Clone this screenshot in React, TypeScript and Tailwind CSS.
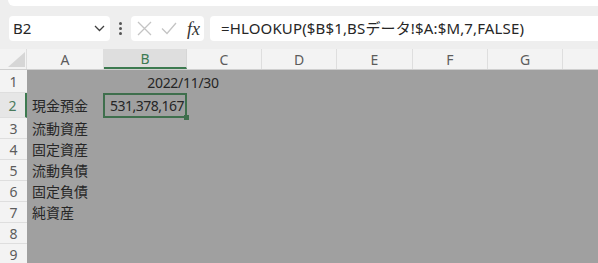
import React from 'react';

const COLS = [
  { label: 'A', w: 77 },
  { label: 'B', w: 83 },
  { label: 'C', w: 75 },
  { label: 'D', w: 75 },
  { label: 'E', w: 76 },
  { label: 'F', w: 75 },
  { label: 'G', w: 75 },
  { label: '', w: 60 },
];

const ROWS: { n: number; h: number; label?: string }[] = [
  { n: 1, h: 23 },
  { n: 2, h: 25, label: '現金預金' },
  { n: 3, h: 21, label: '流動資産' },
  { n: 4, h: 21, label: '固定資産' },
  { n: 5, h: 21, label: '流動負債' },
  { n: 6, h: 21, label: '固定負債' },
  { n: 7, h: 21, label: '純資産' },
  { n: 8, h: 21 },
  { n: 9, h: 21 },
];

const FONT = { fontFamily: '"Noto Sans", "Noto Sans CJK JP", sans-serif' };

const Chevron = () => (
  <svg width="11" height="7" viewBox="0 0 11 7" fill="none">
    <path d="M1 1l4.5 4.5L10 1" stroke="#404040" strokeWidth="1.3" />
  </svg>
);

const Cross = () => (
  <svg width="15" height="15" viewBox="0 0 15 15" fill="none">
    <path d="M1 1l13 13M14 1L1 14" stroke="#c4c4c4" strokeWidth="1.3" />
  </svg>
);

const Check = () => (
  <svg width="16" height="13" viewBox="0 0 16 13" fill="none">
    <path d="M1 6.5l5 5L15 1" stroke="#c4c4c4" strokeWidth="1.3" />
  </svg>
);

export default function App() {
  return (
    <div className="w-[598px] h-[263px] overflow-hidden bg-[#eeeeee] text-[#222]" style={FONT}>
      <div className="h-[6px] ml-[8px] bg-white rounded-bl-[6px]" />

      <div className="flex h-[25px] mt-[10px]">
        <div className="ml-[9px] w-[101px] bg-white rounded-[4px] flex items-center justify-between pl-[4px] pr-[5px]">
          <span className="text-[15px] leading-none text-[#262626]">B2</span>
          <Chevron />
        </div>
        <div className="w-[21px] flex flex-col items-center justify-center gap-[2px]">
          <span className="w-[3px] h-[3px] rounded-full bg-[#555]" />
          <span className="w-[3px] h-[3px] rounded-full bg-[#555]" />
          <span className="w-[3px] h-[3px] rounded-full bg-[#555]" />
        </div>
        <div className="w-[73px] bg-white rounded-[4px] flex items-center pl-[6px]">
          <Cross />
          <span className="ml-[9px]"><Check /></span>
          <span
            className="ml-[10px] italic text-[18px] leading-none text-[#333]"
            style={{ fontFamily: '"Liberation Serif", "DejaVu Serif", serif' }}
          >
            fx
          </span>
        </div>
        <div className="ml-[6px] flex-1 bg-white rounded-l-[4px] flex items-center pl-[11px]">
          <span className="text-[15px] leading-none text-[#262626] whitespace-nowrap tracking-[0.15px]">
            =HLOOKUP($B$1,BSデータ!$A:$M,7,FALSE)
          </span>
        </div>
      </div>

      <div className="flex h-[21px] mt-[8px] bg-[#f3f3f3] border-b border-[#cfcfcf]">
        <div className="w-[27px] shrink-0 relative border-r border-[#dedede]">
          <svg className="absolute left-[8px] top-[3px]" width="17" height="15" viewBox="0 0 17 15">
            <path d="M17 0V15H0Z" fill="#d6d6d6" />
          </svg>
        </div>
        {COLS.map(c => (
          <div
            key={c.label || 'x'}
            style={{ width: c.w }}
            className={
              c.label === 'B'
                ? 'shrink-0 flex items-center justify-center text-[14px] text-[#3c7a52] bg-[#dedede] border-b-2 border-[#3d7a50] border-r border-r-[#d6d6d6]'
                : 'shrink-0 flex items-center justify-center text-[14px] text-[#5c5c5c] border-r border-[#dedede]'
            }
          >
            {c.label}
          </div>
        ))}
      </div>

      {ROWS.map(r => (
        <div key={r.n} className="flex" style={{ height: r.h }}>
          <div
            className={
              r.n === 2
                ? 'w-[27px] shrink-0 flex items-center justify-center text-[14px] text-[#4a7a5c] bg-[#e6e6e6] border-r-2 border-[#3d7a50] border-b border-b-[#dedede]'
                : 'w-[27px] shrink-0 flex items-center justify-center text-[14px] text-[#5c5c5c] bg-[#f3f3f3] border-b border-[#dedede]'
            }
          >
            {r.n}
          </div>
          <div className="flex-1 flex bg-[#a0a0a0]">
            <div className="w-[77px] shrink-0 flex items-center pl-[5px] text-[14px] text-[#262626] whitespace-nowrap" style={{ fontFamily: '"Noto Sans CJK JP", sans-serif' }}>
              {r.label}
            </div>
            {r.n === 1 && (
              <div className="w-[158px] shrink-0 flex items-center justify-center pt-[1px] text-[14px] text-[#262626] tracking-[-0.3px]">
                2022/11/30
              </div>
            )}
            {r.n === 2 && (
              <div className="w-[84px] shrink-0 -ml-[1px] relative border-2 border-[#3f6f4d] flex items-center justify-end pr-[1px] text-[14px] text-[#262626] tracking-[-0.5px]">
                531,378,167
                <span className="absolute -right-[4px] -bottom-[4px] w-[5px] h-[5px] bg-[#3f6f4d]" />
              </div>
            )}
          </div>
        </div>
      ))}
    </div>
  );
}
